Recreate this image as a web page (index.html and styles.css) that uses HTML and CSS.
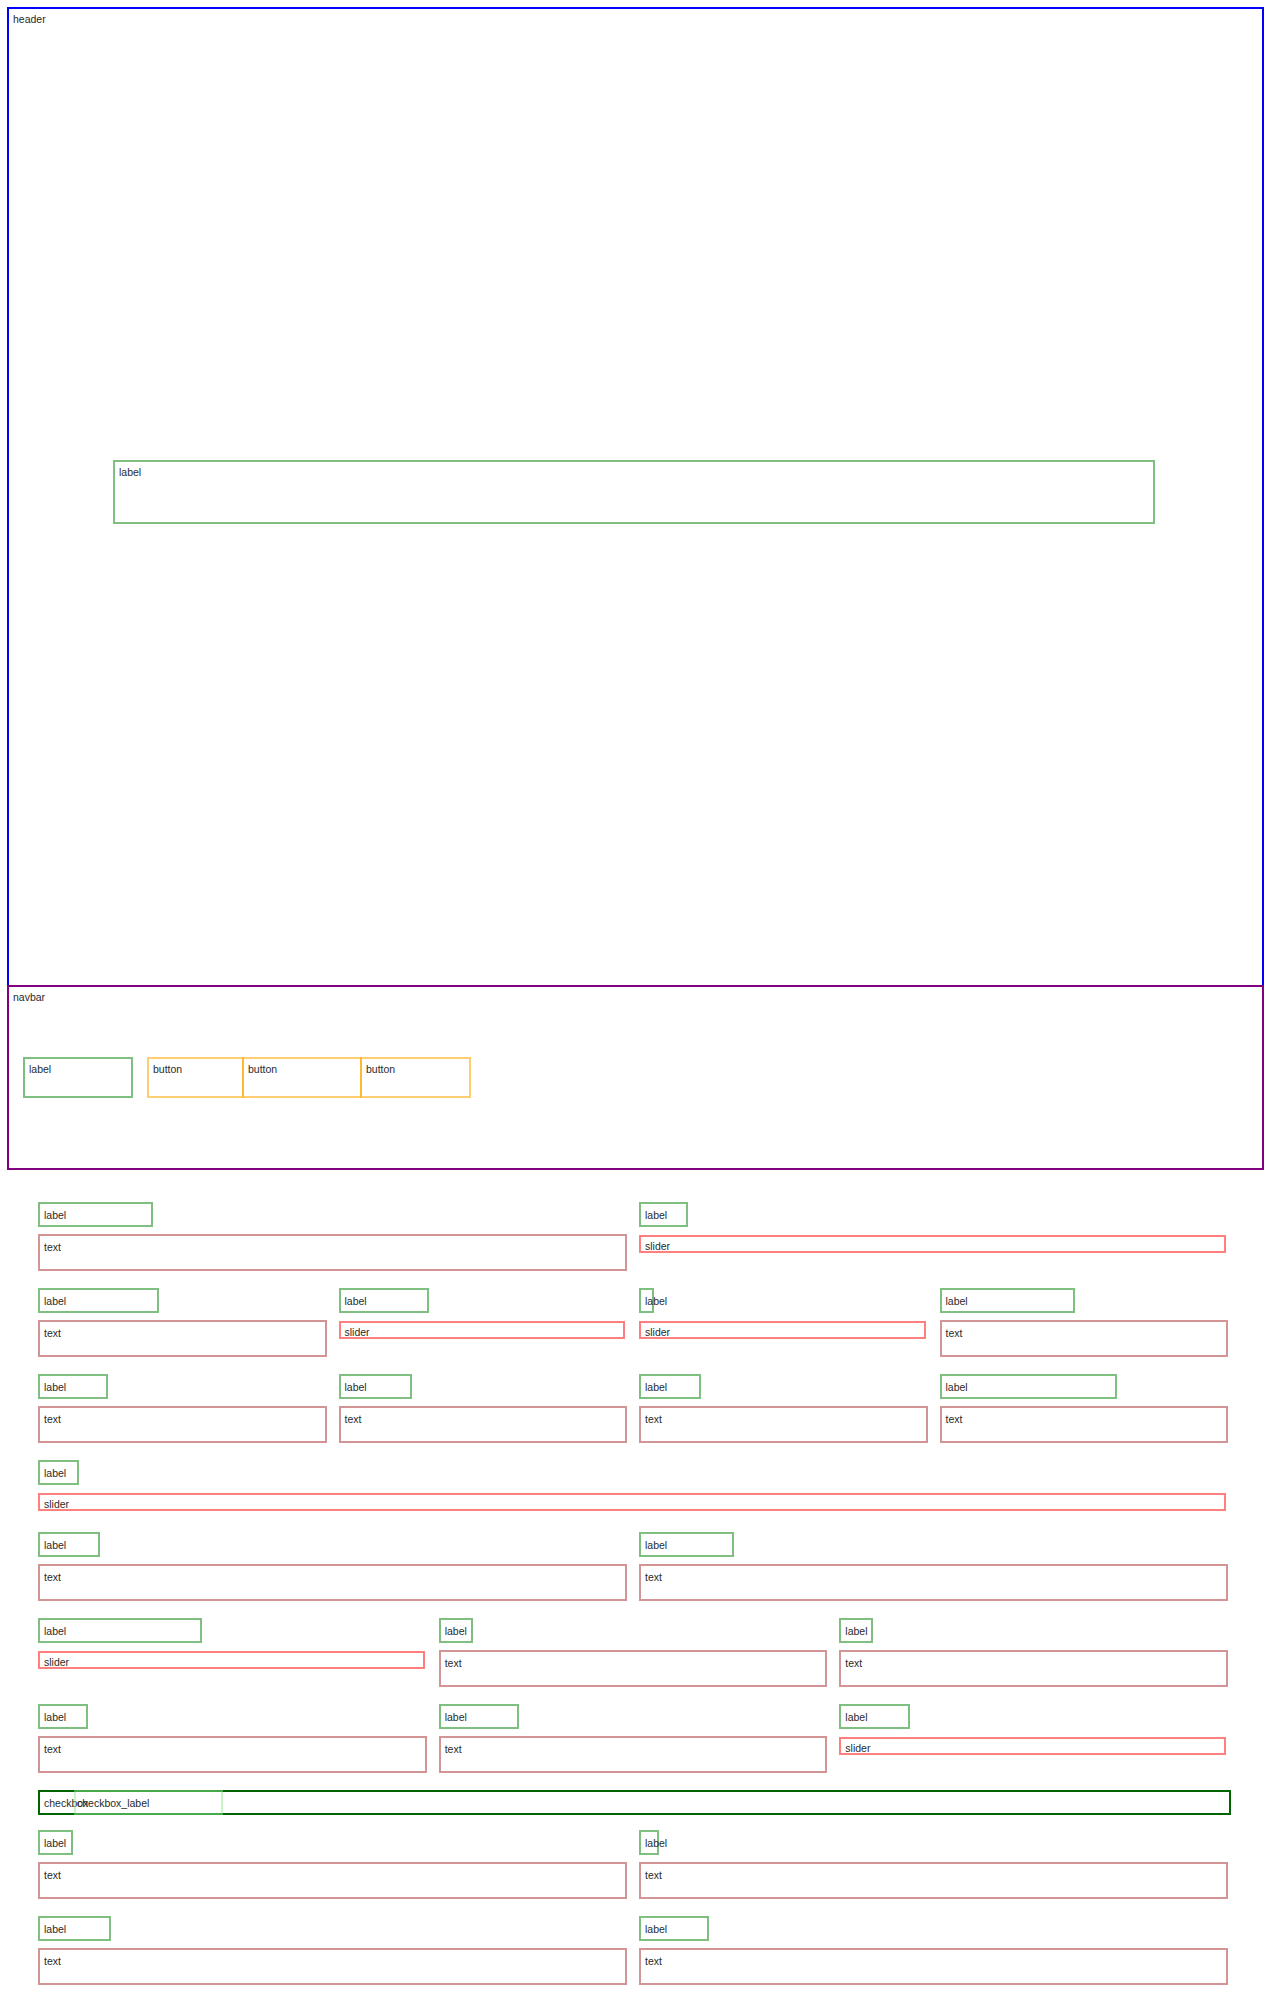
FILE: index.html
```html
<!DOCTYPE html>
<html>
<head>
<meta charset="utf-8">
<title>Wireframe</title>
<link rel="stylesheet" href="styles.css">
</head>
<body>
<div class="header">
  <div class="tag">header</div>
  <div class="hero-label">label</div>
</div>
<div class="navbar">
  <div class="tag">navbar</div>
  <div class="nav-items">
    <div class="nav-label">label</div>
    <div class="btn" style="width:97px">button</div>
    <div class="btn" style="width:120px">button</div>
    <div class="btn" style="width:111px">button</div>
  </div>
</div>
<div class="form">
  <div class="row cols-2">
    <div class="field"><div class="lbl" style="width:115px">label</div><div class="txt">text</div></div>
    <div class="field"><div class="lbl" style="width:49px">label</div><div class="sld">slider</div></div>
  </div>
  <div class="row cols-4">
    <div class="field"><div class="lbl" style="width:121px">label</div><div class="txt">text</div></div>
    <div class="field"><div class="lbl" style="width:90px">label</div><div class="sld">slider</div></div>
    <div class="field"><div class="lbl" style="width:15px">label</div><div class="sld">slider</div></div>
    <div class="field"><div class="lbl" style="width:135px">label</div><div class="txt">text</div></div>
  </div>
  <div class="row cols-4">
    <div class="field"><div class="lbl" style="width:70px">label</div><div class="txt">text</div></div>
    <div class="field"><div class="lbl" style="width:73px">label</div><div class="txt">text</div></div>
    <div class="field"><div class="lbl" style="width:62px">label</div><div class="txt">text</div></div>
    <div class="field"><div class="lbl" style="width:177px">label</div><div class="txt">text</div></div>
  </div>
  <div class="row cols-1">
    <div class="field"><div class="lbl" style="width:41px">label</div><div class="sld">slider</div></div>
  </div>
  <div class="row cols-2">
    <div class="field"><div class="lbl" style="width:62px">label</div><div class="txt">text</div></div>
    <div class="field"><div class="lbl" style="width:95px">label</div><div class="txt">text</div></div>
  </div>
  <div class="row cols-3">
    <div class="field"><div class="lbl" style="width:164px">label</div><div class="sld">slider</div></div>
    <div class="field"><div class="lbl" style="width:34px">label</div><div class="txt">text</div></div>
    <div class="field"><div class="lbl" style="width:34px">label</div><div class="txt">text</div></div>
  </div>
  <div class="row cols-3">
    <div class="field"><div class="lbl" style="width:50px">label</div><div class="txt">text</div></div>
    <div class="field"><div class="lbl" style="width:80px">label</div><div class="txt">text</div></div>
    <div class="field"><div class="lbl" style="width:71px">label</div><div class="sld">slider</div></div>
  </div>
  <div class="checkbox">
    <span>checkbox</span>
    <div class="checkbox-label">checkbox_label</div>
  </div>
  <div class="row cols-2">
    <div class="field"><div class="lbl" style="width:35px">label</div><div class="txt">text</div></div>
    <div class="field"><div class="lbl" style="width:20px">label</div><div class="txt">text</div></div>
  </div>
  <div class="row cols-2">
    <div class="field"><div class="lbl" style="width:73px">label</div><div class="txt">text</div></div>
    <div class="field"><div class="lbl" style="width:70px">label</div><div class="txt">text</div></div>
  </div>
</div>
</body>
</html>
```

FILE: styles.css
```css
* {
  box-sizing: border-box;
}

html, body {
  margin: 0;
  padding: 0;
  background: #ffffff;
}

body {
  font-family: "Liberation Sans", Arial, sans-serif;
  font-size: 10.5px;
  line-height: 13px;
  color: #2a2a2a;
  padding-top: 7px;
  padding-left: 7px;
}

.tag {
  height: 13px;
  white-space: nowrap;
}

.header {
  width: 1257px;
  height: 980px;
  border: 2px solid #0000ff;
  padding: 4px;
}

.hero-label {
  margin-top: 434px;
  margin-left: 100px;
  width: 1042px;
  height: 64px;
  border: 2px solid rgba(0, 128, 0, 0.5);
  padding: 4px;
}

.navbar {
  width: 1257px;
  height: 185px;
  margin-top: -2px;
  border: 2px solid #800080;
  padding: 4px;
}

.nav-items {
  display: flex;
  align-items: flex-start;
  margin-top: 53px;
  margin-left: 10px;
}

.nav-label {
  width: 110px;
  height: 41px;
  border: 2px solid rgba(0, 128, 0, 0.5);
  padding: 4px;
  margin-right: 14px;
}

.btn {
  height: 41px;
  border: 2px solid rgba(255, 165, 0, 0.55);
  padding: 4px;
  white-space: nowrap;
}

.btn + .btn {
  margin-left: -2px;
}

.form {
  margin-top: 32px;
  margin-left: 31px;
  width: 1190px;
}

.row {
  display: grid;
  column-gap: 12px;
  margin-bottom: 17px;
  align-items: start;
}

.cols-1 { grid-template-columns: 1fr; }
.cols-2 { grid-template-columns: repeat(2, 1fr); }
.cols-3 { grid-template-columns: repeat(3, 1fr); }
.cols-4 { grid-template-columns: repeat(4, 1fr); }

.field {
  display: flex;
  flex-direction: column;
  align-items: flex-start;
  min-width: 0;
}

.lbl {
  height: 25px;
  border: 2px solid rgba(0, 128, 0, 0.5);
  padding: 5px 4px 3px 4px;
  margin-bottom: 7px;
  white-space: nowrap;
}

.txt {
  align-self: stretch;
  height: 37px;
  border: 2px solid rgba(165, 42, 42, 0.5);
  padding: 5px 4px 4px 4px;
}

.sld {
  width: calc(100% - 2px);
  height: 18px;
  margin: 1px 0 4px 0;
  border: 2px solid rgba(255, 0, 0, 0.5);
  padding: 3px 4px 0 4px;
  white-space: nowrap;
}

.checkbox {
  position: relative;
  width: 1193px;
  height: 25px;
  border: 2px solid #006400;
  padding: 5px 4px 3px 4px;
  margin-bottom: 15px;
  white-space: nowrap;
}

.checkbox-label {
  position: absolute;
  top: -2px;
  left: 34px;
  width: 149px;
  height: 25px;
  border: 2px solid rgba(144, 238, 144, 0.5);
  padding: 5px 1px 3px 1px;
  white-space: nowrap;
}
```
